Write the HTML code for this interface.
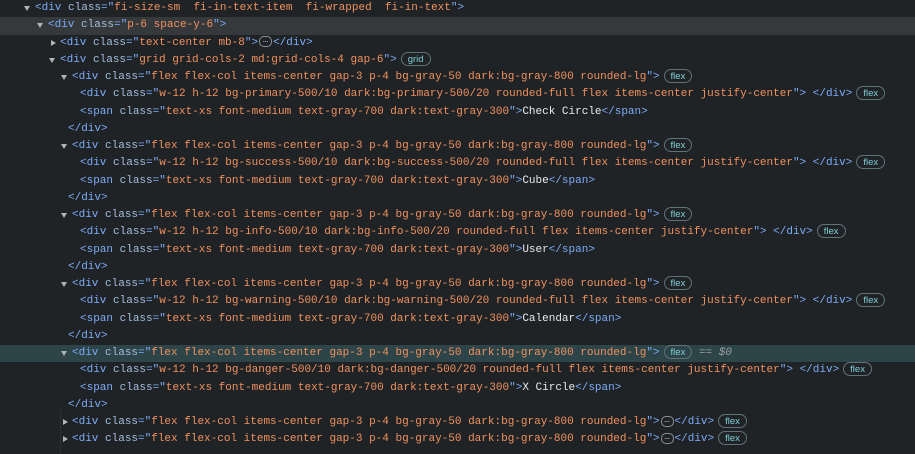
<!DOCTYPE html>
<html><head><meta charset="utf-8"><style>
html,body{margin:0;padding:0;background:#202326;width:915px;height:454px;overflow:hidden}
body{font-family:"Liberation Mono","DejaVu Sans Mono",monospace;font-size:11px;color:#e8eaed;position:relative}
.r{position:absolute;left:0;width:915px;height:17.25px;line-height:17.25px;white-space:pre}
.t{position:absolute;top:0}
.tg{color:#7cacf8}.an{color:#a3bedf}.av{color:#f0915e}.tx{color:#e8eaed}
.ar{position:absolute;top:6px;width:0;height:0;border-left:3.5px solid transparent;border-right:3.5px solid transparent;border-top:5px solid #b0b3b8}
.ac{position:absolute;top:5px;width:0;height:0;border-top:3.5px solid transparent;border-bottom:3.5px solid transparent;border-left:5px solid #b0b3b8}
.b{display:inline-block;height:14px;line-height:13px;border:1px solid #5f7378;border-radius:7px;padding:0 6px;font-size:9.5px;color:#7fd0d8;vertical-align:middle;margin-left:4px;box-sizing:border-box;font-family:"Liberation Sans",sans-serif}
.d{display:inline-block;width:13px;height:11px;line-height:6px;border:1px solid #8a9099;border-radius:5px;font-size:9px;color:#c5cad0;text-align:center;vertical-align:middle;box-sizing:border-box;margin:0 1px}
.hov{background:#35393b}.sel{background:#2d4448}
.eq{color:#9aa0a6;font-style:italic}
.gl{position:absolute;left:60px;top:410px;width:1px;height:44px;background:#2c3034}
</style></head><body>
<div class="gl"></div>
<div class="r" style="top:0"><span class="ar" style="left:24px"></span><span class="t" style="left:35px"><span class="tg">&lt;div</span> <span class="an">class</span><span class="tg">="</span><span class="av">fi-size-sm  fi-in-text-item  fi-wrapped  fi-in-text</span><span class="tg">"&gt;</span></span></div>
<div class="r hov" style="top:17.25px"><span class="ar" style="left:37px"></span><span class="t" style="left:48px"><span class="tg">&lt;div</span> <span class="an">class</span><span class="tg">="</span><span class="av">p-6 space-y-6</span><span class="tg">"&gt;</span></span></div>
<div class="r" style="top:34.5px"><span class="ac" style="left:51px"></span><span class="t" style="left:60px"><span class="tg">&lt;div</span> <span class="an">class</span><span class="tg">="</span><span class="av">text-center mb-8</span><span class="tg">"&gt;</span><span class="d">…</span><span class="tg">&lt;/div&gt;</span></span></div>
<div class="r" style="top:51.75px"><span class="ar" style="left:49px"></span><span class="t" style="left:60px"><span class="tg">&lt;div</span> <span class="an">class</span><span class="tg">="</span><span class="av">grid grid-cols-2 md:grid-cols-4 gap-6</span><span class="tg">"&gt;</span><span class="b">grid</span></span></div>

<div class="r" style="top:69px"><span class="ar" style="left:61px"></span><span class="t" style="left:72px"><span class="tg">&lt;div</span> <span class="an">class</span><span class="tg">="</span><span class="av">flex flex-col items-center gap-3 p-4 bg-gray-50 dark:bg-gray-800 rounded-lg</span><span class="tg">"&gt;</span><span class="b">flex</span></span></div>
<div class="r" style="top:86.25px"><span class="t" style="left:80px"><span class="tg">&lt;div</span> <span class="an">class</span><span class="tg">="</span><span class="av">w-12 h-12 bg-primary-500/10 dark:bg-primary-500/20 rounded-full flex items-center justify-center</span><span class="tg">"&gt;</span> <span class="tg">&lt;/div&gt;</span><span class="b">flex</span></span></div>
<div class="r" style="top:103.5px"><span class="t" style="left:80px"><span class="tg">&lt;span</span> <span class="an">class</span><span class="tg">="</span><span class="av">text-xs font-medium text-gray-700 dark:text-gray-300</span><span class="tg">"&gt;</span><span class="tx">Check Circle</span><span class="tg">&lt;/span&gt;</span></span></div>
<div class="r" style="top:120.75px"><span class="t" style="left:68px"><span class="tg">&lt;/div&gt;</span></span></div>

<div class="r" style="top:138px"><span class="ar" style="left:61px"></span><span class="t" style="left:72px"><span class="tg">&lt;div</span> <span class="an">class</span><span class="tg">="</span><span class="av">flex flex-col items-center gap-3 p-4 bg-gray-50 dark:bg-gray-800 rounded-lg</span><span class="tg">"&gt;</span><span class="b">flex</span></span></div>
<div class="r" style="top:155.25px"><span class="t" style="left:80px"><span class="tg">&lt;div</span> <span class="an">class</span><span class="tg">="</span><span class="av">w-12 h-12 bg-success-500/10 dark:bg-success-500/20 rounded-full flex items-center justify-center</span><span class="tg">"&gt;</span> <span class="tg">&lt;/div&gt;</span><span class="b">flex</span></span></div>
<div class="r" style="top:172.5px"><span class="t" style="left:80px"><span class="tg">&lt;span</span> <span class="an">class</span><span class="tg">="</span><span class="av">text-xs font-medium text-gray-700 dark:text-gray-300</span><span class="tg">"&gt;</span><span class="tx">Cube</span><span class="tg">&lt;/span&gt;</span></span></div>
<div class="r" style="top:189.75px"><span class="t" style="left:68px"><span class="tg">&lt;/div&gt;</span></span></div>

<div class="r" style="top:207px"><span class="ar" style="left:61px"></span><span class="t" style="left:72px"><span class="tg">&lt;div</span> <span class="an">class</span><span class="tg">="</span><span class="av">flex flex-col items-center gap-3 p-4 bg-gray-50 dark:bg-gray-800 rounded-lg</span><span class="tg">"&gt;</span><span class="b">flex</span></span></div>
<div class="r" style="top:224.25px"><span class="t" style="left:80px"><span class="tg">&lt;div</span> <span class="an">class</span><span class="tg">="</span><span class="av">w-12 h-12 bg-info-500/10 dark:bg-info-500/20 rounded-full flex items-center justify-center</span><span class="tg">"&gt;</span> <span class="tg">&lt;/div&gt;</span><span class="b">flex</span></span></div>
<div class="r" style="top:241.5px"><span class="t" style="left:80px"><span class="tg">&lt;span</span> <span class="an">class</span><span class="tg">="</span><span class="av">text-xs font-medium text-gray-700 dark:text-gray-300</span><span class="tg">"&gt;</span><span class="tx">User</span><span class="tg">&lt;/span&gt;</span></span></div>
<div class="r" style="top:258.75px"><span class="t" style="left:68px"><span class="tg">&lt;/div&gt;</span></span></div>

<div class="r" style="top:276px"><span class="ar" style="left:61px"></span><span class="t" style="left:72px"><span class="tg">&lt;div</span> <span class="an">class</span><span class="tg">="</span><span class="av">flex flex-col items-center gap-3 p-4 bg-gray-50 dark:bg-gray-800 rounded-lg</span><span class="tg">"&gt;</span><span class="b">flex</span></span></div>
<div class="r" style="top:293.25px"><span class="t" style="left:80px"><span class="tg">&lt;div</span> <span class="an">class</span><span class="tg">="</span><span class="av">w-12 h-12 bg-warning-500/10 dark:bg-warning-500/20 rounded-full flex items-center justify-center</span><span class="tg">"&gt;</span> <span class="tg">&lt;/div&gt;</span><span class="b">flex</span></span></div>
<div class="r" style="top:310.5px"><span class="t" style="left:80px"><span class="tg">&lt;span</span> <span class="an">class</span><span class="tg">="</span><span class="av">text-xs font-medium text-gray-700 dark:text-gray-300</span><span class="tg">"&gt;</span><span class="tx">Calendar</span><span class="tg">&lt;/span&gt;</span></span></div>
<div class="r" style="top:327.75px"><span class="t" style="left:68px"><span class="tg">&lt;/div&gt;</span></span></div>

<div class="r sel" style="top:345px"><span class="ar" style="left:61px"></span><span class="t" style="left:72px"><span class="tg">&lt;div</span> <span class="an">class</span><span class="tg">="</span><span class="av">flex flex-col items-center gap-3 p-4 bg-gray-50 dark:bg-gray-800 rounded-lg</span><span class="tg">"&gt;</span><span class="b">flex</span> <span class="eq">== $0</span></span></div>
<div class="r" style="top:362.25px"><span class="t" style="left:80px"><span class="tg">&lt;div</span> <span class="an">class</span><span class="tg">="</span><span class="av">w-12 h-12 bg-danger-500/10 dark:bg-danger-500/20 rounded-full flex items-center justify-center</span><span class="tg">"&gt;</span> <span class="tg">&lt;/div&gt;</span><span class="b">flex</span></span></div>
<div class="r" style="top:379.5px"><span class="t" style="left:80px"><span class="tg">&lt;span</span> <span class="an">class</span><span class="tg">="</span><span class="av">text-xs font-medium text-gray-700 dark:text-gray-300</span><span class="tg">"&gt;</span><span class="tx">X Circle</span><span class="tg">&lt;/span&gt;</span></span></div>
<div class="r" style="top:396.75px"><span class="t" style="left:68px"><span class="tg">&lt;/div&gt;</span></span></div>

<div class="r" style="top:414px"><span class="ac" style="left:63px"></span><span class="t" style="left:72px"><span class="tg">&lt;div</span> <span class="an">class</span><span class="tg">="</span><span class="av">flex flex-col items-center gap-3 p-4 bg-gray-50 dark:bg-gray-800 rounded-lg</span><span class="tg">"&gt;</span><span class="d">…</span><span class="tg">&lt;/div&gt;</span><span class="b">flex</span></span></div>
<div class="r" style="top:431.25px"><span class="ac" style="left:63px"></span><span class="t" style="left:72px"><span class="tg">&lt;div</span> <span class="an">class</span><span class="tg">="</span><span class="av">flex flex-col items-center gap-3 p-4 bg-gray-50 dark:bg-gray-800 rounded-lg</span><span class="tg">"&gt;</span><span class="d">…</span><span class="tg">&lt;/div&gt;</span><span class="b">flex</span></span></div>
</body></html>
